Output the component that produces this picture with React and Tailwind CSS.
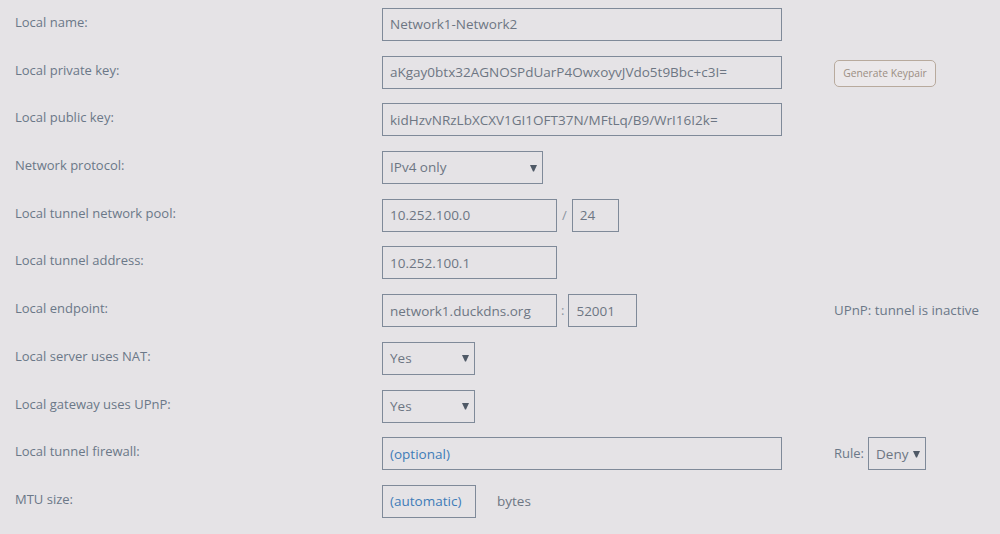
import React from "react";

const font = { fontFamily: '"Open Sans", "Liberation Sans", sans-serif' };

function Arrow() {
  return (
    <svg width="7" height="8" viewBox="0 0 7 8" className="shrink-0">
      <path d="M0 1 H7 L4 7.5 H3 Z" fill="#4f5966" />
    </svg>
  );
}

function Box({ w, children, blue, select }) {
  return (
    <div
      className={`h-[33px] border border-[#7f8a99] flex items-center pl-[7px] pr-[5px] justify-between shrink-0 text-[13.5px] ${blue ? "text-[#3f7cb8]" : "text-[#6d7683]"}`}
      style={{ width: w }}
    >
      <span className="whitespace-nowrap">{children}</span>
      {select && <Arrow />}
    </div>
  );
}

function Row({ label, children, extra }) {
  return (
    <div className="flex h-[33px]">
      <div className="w-[367px] shrink-0 pt-[4px] leading-[20px] text-[#6b7888]">{label}</div>
      <div className="w-[452px] shrink-0 flex items-center">{children}</div>
      <div className="flex items-center">{extra}</div>
    </div>
  );
}

export default function App() {
  return (
    <div className="w-[1000px] h-[534px] bg-[#e5e3e6] overflow-hidden text-[13px]" style={font}>
      <div className="pl-[15px] pt-[8px] flex flex-col gap-[14.7px]">
        <Row label="Local name:">
          <Box w={400}>Network1-Network2</Box>
        </Row>
        <Row
          label="Local private key:"
          extra={
            <button className="h-[27px] w-[102px] mt-[3px] rounded-[5px] border border-[#b8aa9d] bg-[#ebe8ea] text-[10.3px] text-[#9b8e83]">
              Generate Keypair
            </button>
          }
        >
          <Box w={400}>aKgay0btx32AGNOSPdUarP4OwxoyvJVdo5t9Bbc+c3I=</Box>
        </Row>
        <Row label="Local public key:">
          <Box w={400}>kidHzvNRzLbXCXV1GI1OFT37N/MFtLq/B9/WrI16I2k=</Box>
        </Row>
        <Row label="Network protocol:">
          <Box w={161} select>IPv4 only</Box>
        </Row>
        <Row label="Local tunnel network pool:">
          <Box w={175}>10.252.100.0</Box>
          <span className="mx-[5px] text-[#8b93a0]">/</span>
          <Box w={47}>24</Box>
        </Row>
        <Row label="Local tunnel address:">
          <Box w={175}>10.252.100.1</Box>
        </Row>
        <Row
          label="Local endpoint:"
          extra={<span className="text-[#6b7888] whitespace-nowrap text-[13.3px]">UPnP: tunnel is inactive</span>}
        >
          <Box w={175}>network1.duckdns.org</Box>
          <span className="mx-[4px] text-[#8b93a0]">:</span>
          <Box w={69}>52001</Box>
        </Row>
        <Row label="Local server uses NAT:">
          <Box w={93} select>Yes</Box>
        </Row>
        <Row label="Local gateway uses UPnP:">
          <Box w={93} select>Yes</Box>
        </Row>
        <Row
          label="Local tunnel firewall:"
          extra={
            <div className="flex items-center">
              <span className="text-[#6b7888] mr-[4px]">Rule:</span>
              <div className="h-[33px] w-[58px] border border-[#7f8a99] flex items-center justify-between pl-[7px] pr-[5px] text-[13.5px] text-[#6d7683]">
                <span>Deny</span>
                <Arrow />
              </div>
            </div>
          }
        >
          <Box w={400} blue>(optional)</Box>
        </Row>
        <Row label="MTU size:">
          <Box w={94} blue>(automatic)</Box>
          <span className="ml-[21px] text-[13.5px] text-[#6d7683]">bytes</span>
        </Row>
      </div>
    </div>
  );
}
